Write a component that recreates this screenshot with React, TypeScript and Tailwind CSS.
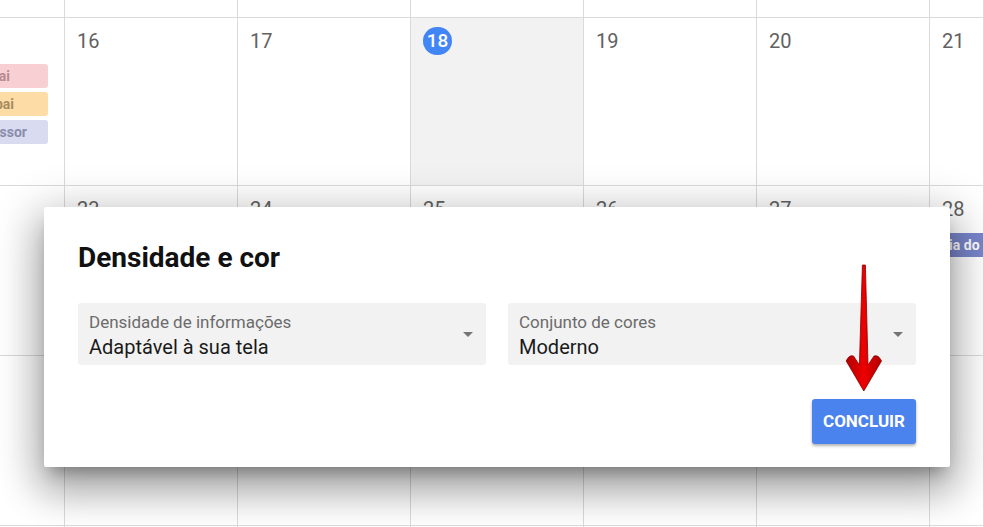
import React from 'react';

const font = { fontFamily: 'Roboto, "Noto Sans", Arial, sans-serif' };

// semana atual e a seguinte (a primeira coluna aparece cortada)
const weekOne = ['15', '16', '17', '18', '19', '20', '21'];
const weekTwo = ['22', '23', '24', '25', '26', '27', '28'];

const pastEvents = [
  { title: 'Almoço com Kai', cls: 'bg-[#f8d0d4] text-[#b98a8f] pr-[38px]' },
  { title: 'Jantar com o pai', cls: 'bg-[#fddca6] text-[#a98c5c] pr-[34px]' },
  { title: 'Reunião com professor', cls: 'bg-[#d9dbf0] text-[#8a8dab] pr-[21px]' },
];

function DateLabel({ day, today }: { day: string; today?: boolean }) {
  if (today) {
    return (
      <div className="flex h-7 w-[29px] items-center justify-center rounded-full bg-[#4285f4] text-[19px] leading-7 font-medium text-white">
        {day}
      </div>
    );
  }
  return <div className="h-7 text-[20px] leading-7 text-[#616161]">{day}</div>;
}

function Arrow() {
  return (
    <svg width="40" height="132" viewBox="0 0 40 132" className="absolute left-[845px] top-[262px]">
      <defs>
        <linearGradient id="red" x1="0" x2="1" y1="0" y2="0">
          <stop offset="0" stopColor="#b00000" />
          <stop offset="0.5" stopColor="#ee0000" />
          <stop offset="1" stopColor="#b00000" />
        </linearGradient>
      </defs>
      <path
        d="M17.4 3 L20.4 3 L23 103 L29 94 Q33.5 92.5 36.5 99 L18.8 129 L1.2 99 Q4 92.5 8.5 94 L14.4 103 Z"
        fill="url(#red)"
        stroke="#8a0000"
        strokeWidth="0.8"
        strokeLinejoin="round"
      />
    </svg>
  );
}

export default function App() {
  return (
    <div className="relative h-[527px] w-[984px] overflow-hidden bg-white" style={font}>
      {/* grade do calendário */}
      <div className="grid h-[527px] grid-cols-[65px_repeat(5,173px)_1fr] grid-rows-[18px_168px_170px_170px_1fr]">
        {Array.from({ length: 7 }).map((_, i) => (
          <div key={'top' + i} className="border-r border-b border-[#dadada]" />
        ))}

        {weekOne.map((day, i) => (
          <div
            key={'w1' + day}
            className={`overflow-hidden border-r border-b border-[#dadada] pt-[9px] pl-3 ${
              day === '18' ? 'bg-[#f2f2f2]' : ''
            }`}
          >
            {i === 0 ? (
              <div className="-ml-3 flex flex-col gap-1 pt-[37px]">
                {pastEvents.map((ev) => (
                  <div
                    key={ev.title}
                    className={`-ml-[152px] flex h-6 w-[200px] items-center justify-end overflow-hidden rounded-[3px] text-[14px] font-bold whitespace-nowrap ${ev.cls}`}
                  >
                    {ev.title}
                  </div>
                ))}
              </div>
            ) : (
              <DateLabel day={day} today={day === '18'} />
            )}
          </div>
        ))}

        {weekTwo.map((day, i) => (
          <div key={'w2' + day} className="overflow-hidden border-r border-b border-[#dadada] pt-[9px] pl-3">
            {i > 0 && <DateLabel day={day} />}
            {day === '28' && (
              <div className="-ml-[10px] mt-[10px] flex h-6 w-[120px] items-center rounded-[3px] bg-[#7986cb] pl-2 text-[14px] font-bold whitespace-nowrap text-white">
                Dia do Índio
              </div>
            )}
          </div>
        ))}

        {Array.from({ length: 7 }).map((_, i) => (
          <div key={'w3' + i} className="border-r border-b border-[#dadada]" />
        ))}
        {Array.from({ length: 7 }).map((_, i) => (
          <div key={'w4' + i} className="border-r border-[#dadada]" />
        ))}
      </div>

      {/* diálogo Densidade e cor */}
      <div className="absolute left-[44px] top-[207px] flex h-[260px] w-[906px] flex-col rounded-[2px] bg-white px-[34px] pt-[35px] pb-[23px] shadow-[0_11px_15px_-7px_rgba(0,0,0,0.3),0_24px_38px_3px_rgba(0,0,0,0.22),0_9px_46px_8px_rgba(0,0,0,0.2)]">
        <h2 className="h-8 text-[28px] leading-8 font-bold text-[#111]">Densidade e cor</h2>

        <div className="mt-[29px] grid grid-cols-2 gap-[22px]">
          {[
            { label: 'Densidade de informações', value: 'Adaptável à sua tela' },
            { label: 'Conjunto de cores', value: 'Moderno' },
          ].map((f) => (
            <div key={f.label} className="flex h-[62px] items-center rounded-[3px] bg-[#f2f2f2] pr-[13px] pl-[11px]">
              <div className="flex-1 self-start pt-[9px]">
                <div className="h-5 text-[17px] leading-5 text-[#6b6b6b]">{f.label}</div>
                <div className="mt-[3px] h-6 text-[20px] leading-6 text-[#1a1a1a]">{f.value}</div>
              </div>
              <div className="h-0 w-0 border-x-[5px] border-t-[5px] border-x-transparent border-t-[#757575]" />
            </div>
          ))}
        </div>

        <div className="mt-[34px] flex justify-end">
          <button className="h-[45px] w-[104px] rounded-[3px] bg-[#4a82ee] text-[17px] font-bold text-white shadow-[0_2px_3px_rgba(0,0,0,0.3)]">
            CONCLUIR
          </button>
        </div>
      </div>

      <Arrow />
    </div>
  );
}
